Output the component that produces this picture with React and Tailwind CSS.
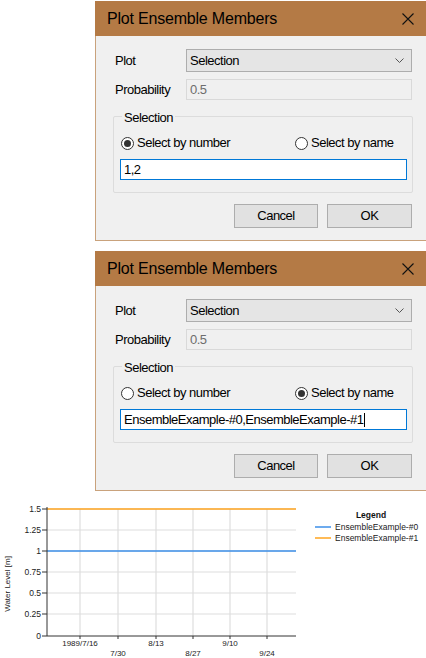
import React from "react";

const Radio = ({ checked, label }) => (
  <div className="flex items-center gap-[3px]">
    <span className="w-[13px] h-[13px] rounded-full border border-[#333] bg-white flex items-center justify-center">
      {checked && <span className="w-[7px] h-[7px] rounded-full bg-[#333]" />}
    </span>
    <span>{label}</span>
  </div>
);

const EnsembleDialog = ({ byName }) => (
  <div className="ml-[95px] w-[331px]">
    {/* title bar */}
    <div className="h-[35px] bg-[#b47a45] flex items-center justify-between pl-[12px] pr-[12px]">
      <span className="text-[16px] tracking-[-0.2px] text-black">Plot Ensemble Members</span>
      <svg width="12" height="12" viewBox="0 0 12 12">
        <path d="M0.5 0.5 L11.5 11.5 M11.5 0.5 L0.5 11.5" stroke="#111" strokeWidth="1.1" />
      </svg>
    </div>

    <div className="h-[205px] bg-[#f0f0f0] border-l border-b border-[#c9a27c] pt-[13px] pl-[19px] text-[13px] tracking-[-0.5px]">
      <div className="flex items-center h-[23px]">
        <span className="w-[71px]">Plot</span>
        <div className="w-[226px] h-[23px] bg-[#e5e5e5] border border-[#adadad] flex items-center justify-between pl-[3px] pr-[7px]">
          <span>Selection</span>
          <svg width="9" height="5" viewBox="0 0 9 5">
            <path d="M0.5 0.5 L4.5 4.5 L8.5 0.5" stroke="#555" fill="none" strokeWidth="1" />
          </svg>
        </div>
      </div>
      <div className="flex items-center h-[21px] mt-[7px]">
        <span className="w-[71px]">Probability</span>
        <div className="w-[226px] h-[21px] bg-[#f0f0f0] border border-[#d9d9d9] flex items-center pl-[3px] text-[#6d6d6d]">
          0.5
        </div>
      </div>

      {/* group box */}
      <div className="relative ml-[-2px] mt-[16px] w-[300px] h-[77px] border border-[#dcdcdc] rounded-[2px] pt-[18px] pl-[6px]">
        <span className="absolute top-[-9px] left-[8px] bg-[#f0f0f0] px-[2px]">Selection</span>
        <div className="flex items-center h-[16px]">
          <div className="w-[175px] pl-[1px]">
            <Radio checked={!byName} label="Select by number" />
          </div>
          <Radio checked={byName} label="Select by name" />
        </div>
        <div className="mt-[8px] w-[287px] h-[21px] bg-white border border-[#0078d7] flex items-center pl-[3px]">
          {byName ? (
            <>
              <span>EnsembleExample-#0,EnsembleExample-#1</span>
              <span className="ml-[1px] w-[1px] h-[14px] bg-black" />
            </>
          ) : (
            <span>1,2</span>
          )}
        </div>
      </div>

      <div className="flex gap-[9px] mt-[11px] ml-[119px]">
        <button className="w-[84px] h-[24px] bg-[#e1e1e1] border border-[#adadad]">Cancel</button>
        <button className="w-[85px] h-[24px] bg-[#e1e1e1] border border-[#adadad]">OK</button>
      </div>
    </div>
  </div>
);

const yTicks = [
  { v: "1.5", y: 18 },
  { v: "1.25", y: 39 },
  { v: "1", y: 60 },
  { v: "0.75", y: 81 },
  { v: "0.5", y: 102 },
  { v: "0.25", y: 123 },
  { v: "0", y: 145 },
];

const xTicks = [
  { t: "1989/7/16", x: 80, row: 0 },
  { t: "7/30", x: 118, row: 1 },
  { t: "8/13", x: 156, row: 0 },
  { t: "8/27", x: 193, row: 1 },
  { t: "9/10", x: 230, row: 0 },
  { t: "9/24", x: 267, row: 1 },
];

const Chart = () => (
  <svg width="426" height="168" viewBox="0 0 426 168" className="block" fontFamily="'Liberation Sans', Arial, sans-serif">
    {yTicks.slice(0, 6).map((t) => (
      <line key={t.v} x1="47" x2="296" y1={t.y} y2={t.y} stroke="#dedede" strokeWidth="1.2" />
    ))}
    {xTicks.map((t) => (
      <line key={t.t} x1={t.x} x2={t.x} y1="18" y2="145" stroke="#dedede" strokeWidth="1.2" />
    ))}
    <line x1="47" x2="296" y1="18" y2="18" stroke="#ffa51f" strokeWidth="1.5" />
    <line x1="47" x2="296" y1="60" y2="60" stroke="#3d8fe8" strokeWidth="1.5" />
    <line x1="47" x2="47" y1="16" y2="145" stroke="#333" strokeWidth="1" />
    <line x1="47" x2="296" y1="145" y2="145" stroke="#333" strokeWidth="1" />
    {yTicks.map((t) => (
      <g key={t.v}>
        <line x1="42" x2="47" y1={t.y} y2={t.y} stroke="#333" strokeWidth="1" />
        <text x="41" y={t.y + 3} textAnchor="end" fontSize="8.5" fill="#222">{t.v}</text>
      </g>
    ))}
    {xTicks.map((t) => (
      <g key={t.t}>
        <line x1={t.x} x2={t.x} y1="145" y2="148" stroke="#333" strokeWidth="1" />
        <text x={t.x} y={t.row === 0 ? 155 : 165} textAnchor="middle" fontSize="8" fill="#222">{t.t}</text>
      </g>
    ))}
    <text x="10" y="93" fontSize="8" fill="#222" textAnchor="middle" transform="rotate(-90 10 93)">Water Level [m]</text>

    <text x="371" y="27" textAnchor="middle" fontSize="8.5" fontWeight="bold" fill="#111">Legend</text>
    <line x1="315" x2="331" y1="36" y2="36" stroke="#3d8fe8" strokeWidth="1.5" />
    <text x="335" y="39" fontSize="8.5" fill="#222">EnsembleExample-#0</text>
    <line x1="315" x2="331" y1="47" y2="47" stroke="#ffa51f" strokeWidth="1.5" />
    <text x="335" y="50" fontSize="8.5" fill="#222">EnsembleExample-#1</text>
  </svg>
);

export default function App() {
  return (
    <div className="w-[426px] h-[658px] bg-white overflow-hidden font-['Liberation_Sans',Arial,sans-serif] text-black">
      <div className="pt-[1px]">
        <EnsembleDialog byName={false} />
      </div>
      <div className="mt-[10px]">
        <EnsembleDialog byName={true} />
      </div>
      <Chart />
    </div>
  );
}
